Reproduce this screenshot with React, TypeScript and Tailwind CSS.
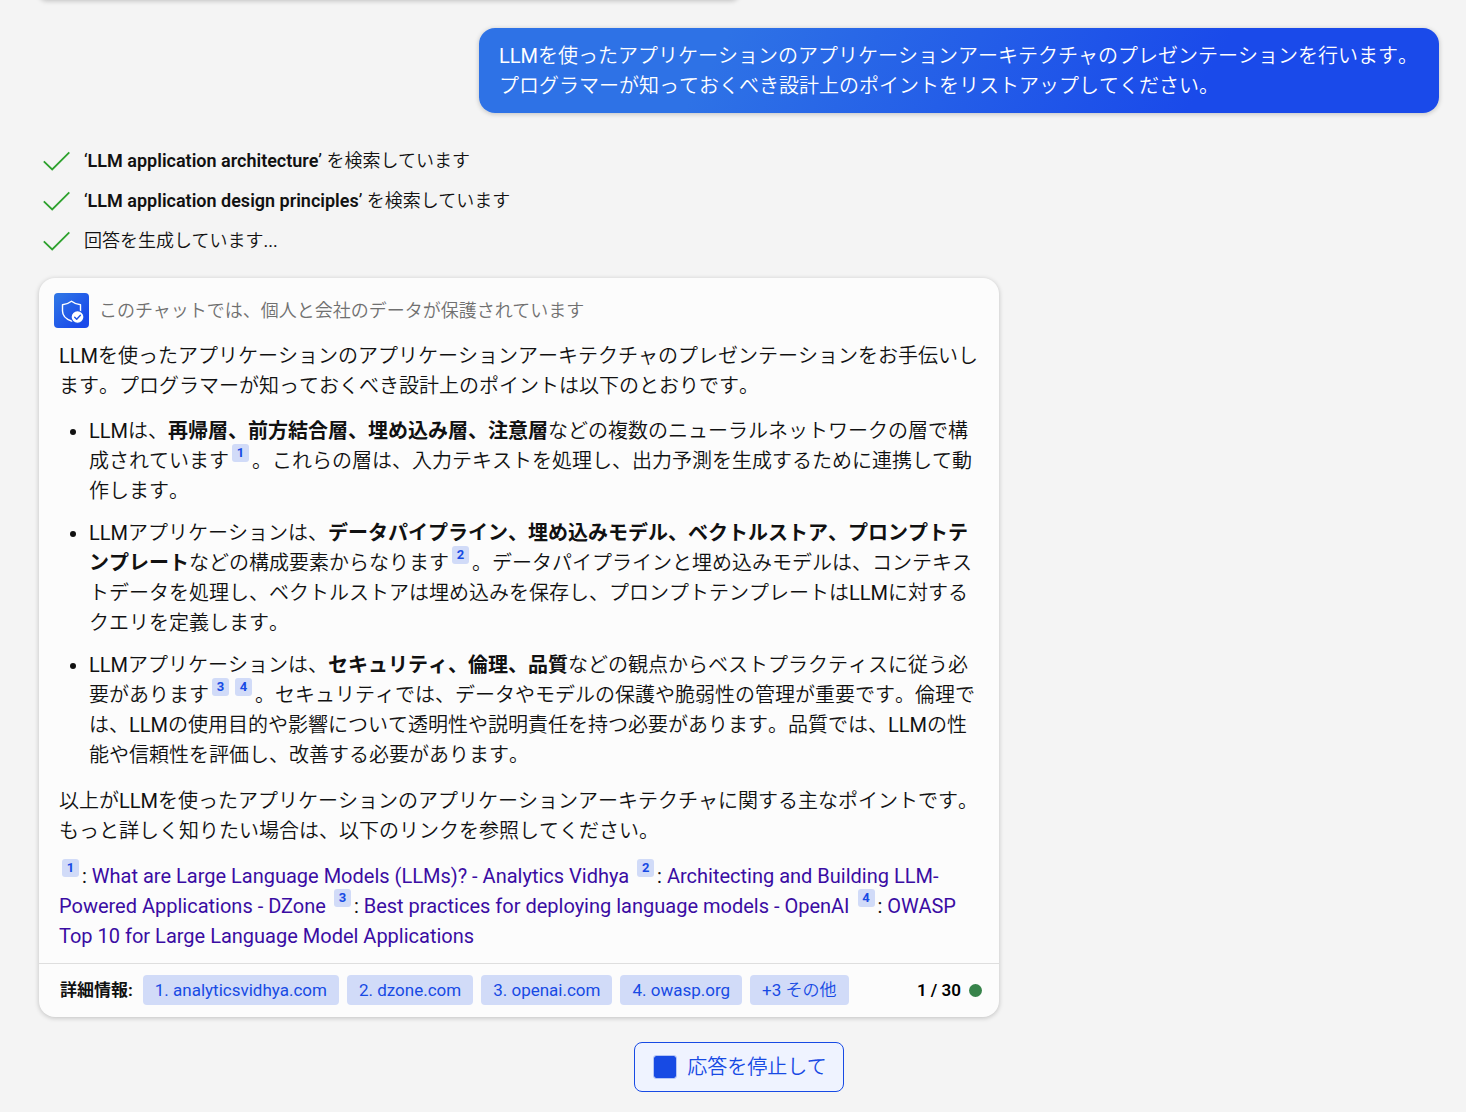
import type { ReactNode } from 'react';

function Cite({ n }: { n: number }) {
  return (
    <a
      href={`#source-${n}`}
      className="-mt-[2px] mx-[3px] inline-block h-[18px] w-[17px] rounded-[3px] bg-[#d1dbf8] text-center align-top text-[13px] leading-[18px] font-bold text-[#174ae4]"
    >
      {n}
    </a>
  );
}

function Source({ n, children }: { n: number; children: ReactNode }) {
  return (
    <>
      <Cite n={n} />:{' '}
      <a href={`#source-${n}`} className="text-[#3a0ca3]">
        {children}
      </a>
    </>
  );
}

function Strong({ children }: { children: ReactNode }) {
  return <b className="font-[Roboto,'Noto_Sans_CJK_JP',sans-serif] font-bold">{children}</b>;
}

function Step({ children }: { children: ReactNode }) {
  return (
    <li className="flex h-10 items-center gap-[13px]">
      <svg width="28" height="20" viewBox="0 0 28 20" fill="none" stroke="#2da12d" strokeWidth="1.8" className="shrink-0">
        <path d="M.8 10.300 9.200 18.500 26.300 1.300" />
      </svg>
      <span>{children}</span>
    </li>
  );
}

function ShieldIcon() {
  return (
    <svg width="35" height="35" viewBox="0 0 35 35" fill="none" className="shrink-0">
      <defs>
        <linearGradient id="shield-bg" x1="0" y1="0" x2="1" y2="1">
          <stop offset="0.1" stopColor="#2e74e6" />
          <stop offset="0.8" stopColor="#1a4aea" />
        </linearGradient>
      </defs>
      <rect width="35" height="35" rx="4" fill="url(#shield-bg)" />
      <path
        d="M17.5 8.3c2.5 2 5.500 3.200 9 3.400v6.300c0 5-3.200 8-9 10-5.800-2-9-5-9-10v-6.300c3.500-.2 6.500-1.400 9-3.400Z"
        stroke="#fff"
        strokeWidth="1.4"
        strokeLinejoin="round"
      />
      <circle cx="23.500" cy="24" r="6.800" fill="#2058e6" />
      <circle cx="23.500" cy="24" r="5.800" fill="#fff" />
      <path d="m20.700 24.200 2 2 3.700-4" stroke="#1f55e5" strokeWidth="1.400" strokeLinecap="round" strokeLinejoin="round" />
    </svg>
  );
}

const chips = ['1. analyticsvidhya.com', '2. dzone.com', '3. openai.com', '4. owasp.org', '+3 その他'];

const cardShadow = 'shadow-[0_1px_5px_rgba(0,0,0,0.22)]';

export default function App() {
  return (
    <main
      lang="ja"
      className="flex min-h-screen flex-col overflow-hidden bg-[#f4f4f4] pr-[27px] pb-5 pl-[39px] font-[Roboto,'Noto_Sans_CJK_JP_DemiLight','Noto_Sans_CJK_JP_Light','Noto_Sans_CJK_JP',sans-serif] text-[20px] leading-[30px] text-[#111]"
    >
      <div className={`-mt-4 h-4 w-[700px] max-w-full rounded-2xl bg-[#fcfcfc] ${cardShadow}`} />

      <div
        className={`mt-7 w-full max-w-[960px] self-end rounded-2xl bg-linear-[120deg,#2e72e6_25%,#1a4aea_75%] px-5 pt-[13px] pb-3 text-white ${cardShadow}`}
      >
        <p className="[font-kerning:none]">
          LLMを使ったアプリケーションのアプリケーションアーキテクチャのプレゼンテーションを行います。
          <br />
          プログラマーが知っておくべき設計上のポイントをリストアップしてください。
        </p>
      </div>

      <ul className="mt-7 ml-1 text-[18px]">
        <Step>
          ‘<b className="font-semibold">LLM application architecture</b>’ を検索しています
        </Step>
        <Step>
          ‘<b className="font-semibold">LLM application design principles</b>’ を検索しています
        </Step>
        <Step>回答を生成しています...</Step>
      </ul>

      <article className={`mt-[17px] w-full max-w-[960px] rounded-2xl bg-[#fcfcfc] ${cardShadow}`}>
        <header className="flex items-center gap-[10px] px-[15px] pt-[15px] text-[18px] text-[#707070]">
          <ShieldIcon />
          <span>このチャットでは、個人と会社のデータが保護されています</span>
        </header>

        <div className="px-5 pt-[13px] pb-3">
          <div className="[font-kerning:none]">
            <p>
              LLMを使ったアプリケーションのアプリケーションアーキテクチャのプレゼンテーションをお手伝いします。プログラマーが知っておくべき設計上のポイントは以下のとおりです。
            </p>
            <ul className="mt-[15px] mb-4 list-disc space-y-3 pl-[30px]">
              <li>
                LLMは、<Strong>再帰層、前方結合層、埋め込み層、注意層</Strong>
                などの複数のニューラルネットワークの層で構成されています
                <Cite n={1} />
                。これらの層は、入力テキストを処理し、出力予測を生成するために連携して動作します。
              </li>
              <li>
                LLMアプリケーションは、
                <Strong>データパイプライン、埋め込みモデル、ベクトルストア、プロンプトテンプレート</Strong>
                などの構成要素からなります
                <Cite n={2} />
                。データパイプラインと埋め込みモデルは、コンテキストデータを処理し、ベクトルストアは埋め込みを保存し、プロンプトテンプレートはLLMに対するクエリを定義します。
              </li>
              <li>
                LLMアプリケーションは、<Strong>セキュリティ、倫理、品質</Strong>
                などの観点からベストプラクティスに従う必要があります
                <Cite n={3} />
                <Cite n={4} />
                。セキュリティでは、データやモデルの保護や脆弱性の管理が重要です。倫理では、LLMの使用目的や影響について透明性や説明責任を持つ必要があります。品質では、LLMの性能や信頼性を評価し、改善する必要があります。
              </li>
            </ul>
            <p>
              以上がLLMを使ったアプリケーションのアプリケーションアーキテクチャに関する主なポイントです。もっと詳しく知りたい場合は、以下のリンクを参照してください。
            </p>
          </div>
          <p className="mt-[15px]">
            <Source n={1}>What are Large Language Models (LLMs)? - Analytics Vidhya</Source>{' '}
            <Source n={2}>Architecting and Building LLM-Powered Applications - DZone</Source>{' '}
            <Source n={3}>Best practices for deploying language models - OpenAI</Source>{' '}
            <Source n={4}>OWASP Top 10 for Large Language Model Applications</Source>
          </p>
        </div>

        <footer className="flex items-center border-t border-[#dedede] pt-[11px] pr-[17px] pb-3 pl-[21px] text-[17px]">
          <span className="mr-[10px]">
            <Strong>詳細情報:</Strong>
          </span>
          <nav className="flex gap-2">
            {chips.map((c) => (
              <a key={c} href="#sources" className="rounded bg-[#d1dbf8] px-3 whitespace-nowrap text-[#174ae4]">
                {c}
              </a>
            ))}
          </nav>
          <span className="ml-auto font-semibold text-black">1 / 30</span>
          <span className="ml-2 size-[13px] rounded-full bg-[#37834a]" />
        </footer>
      </article>

      <button
        type="button"
        className="mt-[25px] flex h-[50px] items-center gap-[10px] self-center rounded-lg border border-[#174ae4] bg-[#eff3ff] pr-4 pl-[18px] text-[#174ae4]"
      >
        <span className="size-6 rounded-[3px] border border-[#b4c5f6] bg-[#174ae4] bg-clip-padding" />
        応答を停止して
      </button>
    </main>
  );
}
